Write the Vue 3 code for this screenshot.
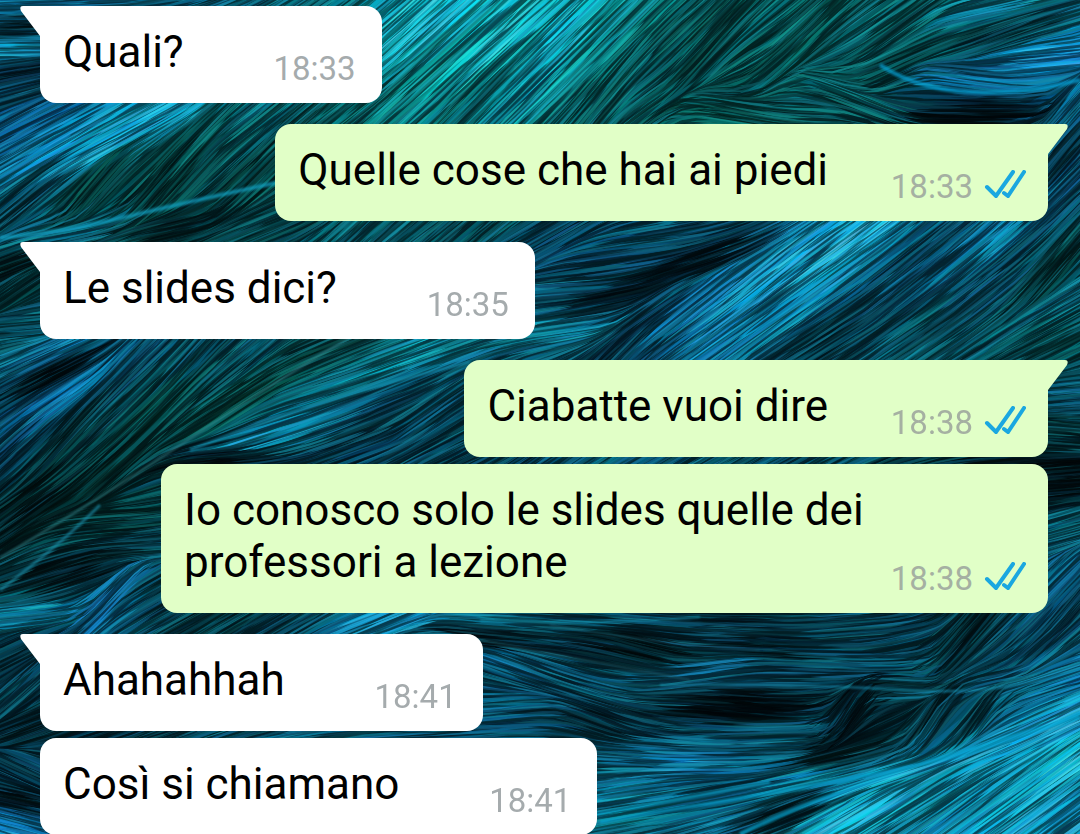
<script setup>
const messages = [
  { id: 1, text: 'Quali?', time: '18:33', sent: false, first: true },
  { id: 2, text: 'Quelle cose che hai ai piedi', time: '18:33', sent: true, first: true },
  { id: 3, text: 'Le slides dici?', time: '18:35', sent: false, first: true },
  { id: 4, text: 'Ciabatte vuoi dire', time: '18:38', sent: true, first: true },
  { id: 5, text: 'Io conosco solo le slides quelle dei professori a lezione', time: '18:38', sent: true, first: false },
  { id: 6, text: 'Ahahahhah', time: '18:41', sent: false, first: true },
  { id: 7, text: 'Così si chiamano', time: '18:41', sent: false, first: false }
]

// Plumage wallpaper: each knot is x, y, barb angle, brightness, hue.
const knots = [
  [10, 8, 2, 0.75, 200], [20, 25, 2, 0.15, 200], [15, 48, 0, 0.85, 193], [20, 72, 10, 0.2, 200], [20, 90, 15, 0.35, 200],
  [15, 122, 28, 0.6, 203], [40, 160, 30, 0.8, 199], [130, 125, 28, 0.95, 196], [95, 150, 28, 0.85, 196], [200, 160, 48, 0.35, 184],
  [20, 200, 40, 0.35, 195], [90, 190, 50, 0.2, 180], [160, 190, 50, 0.2, 180], [240, 130, 38, 0.5, 188], [350, 112, 38, 0.45, 184],
  [250, 180, 45, 0.25, 184], [420, 30, 42, 0.95, 188], [400, 90, 42, 0.6, 184], [500, 40, 42, 0.9, 186], [540, 60, 45, 0.85, 190],
  [470, 100, 45, 0.5, 184], [600, 40, 45, 0.6, 184], [600, 100, 50, 0.4, 184], [700, 60, 48, 0.35, 182], [800, 45, 44, 0.38, 182],
  [900, 25, 36, 0.4, 184], [900, 70, 25, 0.3, 184], [1000, 8, 12, 0.6, 192], [1000, 35, 20, 0.3, 192], [1050, 60, 5, 0.9, 202],
  [960, 78, -8, 0.6, 200], [980, 112, 0, 0.05, 200], [860, 100, -22, 0.38, 186], [740, 112, -10, 0.35, 182], [1065, 110, 50, 0.6, 199],
  [1065, 190, 45, 0.5, 201], [1060, 160, 50, 0.3, 201], [20, 265, 20, 0.12, 190], [10, 290, 35, 0.3, 188], [20, 325, 5, 0.4, 194],
  [60, 236, 10, 0.6, 194], [160, 230, 12, 0.2, 190], [250, 230, 22, 0.3, 188], [360, 230, 42, 0.45, 190], [470, 230, 40, 0.35, 190],
  [560, 238, 30, 0.42, 200], [650, 245, 8, 0.45, 198], [600, 262, 8, 0.38, 200], [690, 262, 18, 0.12, 200], [570, 290, 4, 0.45, 197],
  [600, 300, 12, 0.1, 200], [560, 325, 8, 0.65, 193], [640, 315, 35, 0.35, 200], [620, 350, 45, 0.3, 200], [700, 300, 38, 0.75, 200],
  [760, 280, 38, 0.9, 198], [850, 245, 36, 1, 194], [770, 320, 36, 0.7, 198], [900, 290, 38, 0.5, 200], [920, 245, 38, 0.45, 200],
  [1000, 240, 40, 0.75, 198], [980, 290, 38, 0.4, 198], [830, 340, 32, 0.3, 196], [920, 340, 34, 0.45, 192], [1050, 270, 50, 0.25, 186],
  [1050, 310, 30, 0.5, 192], [1050, 345, 26, 0.35, 186], [1065, 400, 5, 0.45, 197], [1065, 430, -5, 0.25, 190], [1065, 480, 5, 0.06, 196],
  [1065, 535, 15, 0.5, 194], [1060, 580, 45, 0.55, 200], [1065, 610, 50, 0.3, 200], [60, 346, 24, 0.8, 198], [55, 374, 27, 0.03, 200],
  [50, 402, 34, 0.8, 203], [115, 370, 46, 0.5, 200], [20, 440, 42, 0.35, 200], [60, 440, 48, 0.25, 190], [190, 360, 48, 0.38, 194],
  [160, 410, 45, 0.28, 180], [110, 470, 42, 0.2, 182], [250, 350, 40, 0.4, 194], [240, 400, 33, 0.25, 178], [330, 350, 22, 0.35, 184],
  [410, 355, 20, 0.7, 190], [320, 395, 18, 0.55, 192], [260, 440, 18, 0.8, 194], [230, 458, 4, 0.03, 200], [370, 405, 22, 0.45, 198],
  [420, 420, 35, 0.4, 196], [360, 450, 20, 0.35, 198], [20, 510, 35, 0.12, 190], [110, 520, 4, 0.25, 184], [140, 550, 3, 0.35, 194],
  [70, 575, 18, 0.1, 194], [20, 618, 5, 0.6, 192], [110, 600, 48, 0.75, 203], [150, 590, 30, 0.3, 196], [220, 622, 30, 0.3, 192],
  [390, 622, 22, 0.85, 198], [290, 622, 30, 0.35, 196], [10, 650, 25, 0.3, 198], [20, 690, 42, 0.35, 196], [15, 730, 20, 0.2, 196],
  [20, 770, -25, 0.35, 200], [15, 800, -12, 0.15, 200], [20, 825, -15, 0.8, 202], [510, 620, -3, 0.6, 194], [520, 665, -20, 0.6, 199],
  [500, 640, -5, 0.04, 200], [600, 625, -3, 0.4, 198], [640, 650, -14, 0.08, 194], [560, 685, -18, 0.4, 198], [520, 710, 5, 0.5, 198],
  [600, 720, -20, 0.2, 198], [700, 675, 8, 0.65, 196], [730, 705, -4, 0.01, 200], [780, 645, -3, 0.15, 198], [850, 630, 4, 0.4, 196],
  [860, 665, -3, 0.45, 196], [900, 685, -4, 0.4, 194], [850, 710, 58, 0.1, 198], [930, 720, 58, 0.2, 194], [960, 640, 50, 0.2, 194],
  [1040, 650, 40, 0.5, 198], [1000, 680, 10, 0.5, 198], [1065, 680, 18, 0.7, 200], [980, 715, 55, 0.3, 194], [1060, 720, 25, 0.95, 197],
  [980, 750, 22, 0.95, 196], [900, 770, 16, 0.9, 194], [800, 785, 12, 0.9, 196], [640, 750, -4, 0.45, 196], [690, 765, 0, 0.85, 200],
  [780, 740, 2, 0.45, 197], [830, 760, 12, 0.12, 190], [630, 790, 8, 0.6, 196], [640, 815, 10, 0.7, 192], [700, 800, 10, 0.35, 198],
  [780, 812, 22, 0.15, 194], [700, 830, 16, 0.6, 198], [840, 820, 30, 0.95, 192], [920, 800, 32, 0.75, 194], [960, 820, 36, 0.8, 196],
  [1020, 790, 36, 0.85, 192], [1060, 770, 36, 0.95, 188], [1060, 820, 36, 0.85, 196]
]

let seed = 7321
const random = () => {
  seed = (seed * 1664525 + 1013904223) % 4294967296
  return seed / 4294967296
}

function sample(x, y) {
  let total = 0
  let angle = 0
  let light = 0
  let hue = 0
  for (const [kx, ky, a, l, h] of knots) {
    const dx = x - kx
    const dy = y - ky
    const rad = (a * Math.PI) / 180
    const along = dx * Math.cos(rad) - dy * Math.sin(rad)
    const across = dx * Math.sin(rad) + dy * Math.cos(rad)
    const d = (along * along) / 5 + across * across * 1.6 + 60
    const w = 1 / (d * d)
    total += w
    angle += a * w
    light += l * w
    hue += h * w
  }
  return { angle: angle / total, light: light / total, hue: hue / total }
}

// A barb is a thin blade pointed at both ends, bent along the local direction.
function barb(x, y, length, width) {
  const middle = sample(x, y)
  const points = [[x, y]]
  for (const way of [1, -1]) {
    let px = x
    let py = y
    for (let i = 0; i < 3; i++) {
      const r = (sample(px, py).angle * Math.PI) / 180
      px += (Math.cos(r) * length * way) / 6
      py -= (Math.sin(r) * length * way) / 6
      if (way === 1) points.push([px, py])
      else points.unshift([px, py])
    }
  }
  const spread = [0, 0.7, 0.95, 1, 0.95, 0.7, 0]
  const r = (middle.angle * Math.PI) / 180
  const nx = (Math.sin(r) * width) / 2
  const ny = (Math.cos(r) * width) / 2
  const upper = points.map(([px, py], i) => `${(px - nx * spread[i]).toFixed(1)} ${(py - ny * spread[i]).toFixed(1)}`)
  const lower = points.map(([px, py], i) => `${(px + nx * spread[i]).toFixed(1)} ${(py + ny * spread[i]).toFixed(1)}`)
  return { d: `M${upper.join('L')}L${lower.reverse().join('L')}Z`, ...middle }
}

function layer(cell, length, width, opacity, contrast, darkShare) {
  const blades = []
  for (let y = -10; y < 850; y += cell) {
    for (let x = -50; x < 1120; x += cell * 2.4) {
      const b = barb(
        x + random() * cell * 2.4,
        y + random() * cell,
        length * (0.6 + random() * 0.8),
        width * (0.6 + random() * 0.8)
      )
      const dark = random() < darkShare
      const l = dark ? b.light * 20 : 4 + b.light * 50 + (random() - 0.5) * contrast
      const hue = b.hue - 2 + (random() - 0.5) * 14
      blades.push({
        d: b.d,
        fill: `hsl(${hue.toFixed(0)} ${dark ? 85 : 100 - contrast}% ${Math.max(2, l).toFixed(0)}%)`,
        opacity
      })
    }
  }
  return blades
}
const ground = layer(13, 90, 24, 0.85, 2, 0.1)
const strands = [
  ...layer(10, 120, 8, 0.6, 6, 0.38),
  ...layer(8, 100, 4, 0.65, 12, 0.4),
  ...layer(7, 80, 2, 0.75, 22, 0.4)
]

const quills = [
  { d: 'M0 238Q60 233 130 216T280 182', stroke: '#139fc0', width: 4 },
  { d: 'M0 558Q90 505 200 432T350 338', stroke: '#327f85', width: 2 },
  { d: 'M0 590Q60 545 100 505', stroke: '#1a86a0', width: 3 },
  { d: 'M470 362Q330 395 190 450', stroke: '#1589a8', width: 3 },
  { d: 'M880 65Q950 111 1080 80', stroke: '#079ed1', width: 4 },
  { d: 'M480 620Q600 625 700 617', stroke: '#1596b4', width: 2 },
  { d: 'M660 685Q800 683 900 690T1080 668', stroke: '#168eb0', width: 2 },
  { d: 'M600 822Q760 795 880 773T1080 712', stroke: '#079fcb', width: 4 },
  { d: 'M740 834Q850 780 1080 717', stroke: '#07a5d0', width: 4 },
  { d: 'M480 640Q560 655 690 680', stroke: '#317f91', width: 1 },
  { d: 'M550 625Q660 645 760 650', stroke: '#286e80', width: 1 },
  { d: 'M480 834Q590 817 770 782', stroke: '#08a3ca', width: 3 }
]
</script>

<template>
  <main class="chat">
    <svg class="wallpaper" viewBox="0 0 1080 834" preserveAspectRatio="xMidYMid slice" aria-hidden="true">
      <rect width="1080" height="834" fill="#02232f" />
      <g class="ground">
        <path v-for="(b, i) in ground" :key="i" :d="b.d" :fill="b.fill" :opacity="b.opacity" />
      </g>
      <g class="strands">
        <path v-for="(b, i) in strands" :key="i" :d="b.d" :fill="b.fill" :opacity="b.opacity" />
      </g>
      <g class="quills">
        <path v-for="q in quills" :key="q.d" :d="q.d" :stroke="q.stroke" :stroke-width="q.width" />
      </g>
    </svg>

    <ol class="messages">
      <li
        v-for="m in messages"
        :key="m.id"
        class="bubble"
        :class="{ sent: m.sent, first: m.first }"
      >
        <svg v-if="m.first" class="tail" viewBox="0 0 40 32" aria-hidden="true">
          <path d="M40 0H3Q-1 0 1 5L20 30V32H40Z" />
        </svg>
        <p class="text">{{ m.text }}<span class="spacer"></span></p>
        <div class="meta">
          <time>{{ m.time }}</time>
          <svg v-if="m.sent" class="ticks" viewBox="0 0 42 28" role="img" aria-label="Letto">
            <path d="M3 17L12 26L29 2M20 23L24 26L40 2" />
          </svg>
        </div>
      </li>
    </ol>
  </main>
</template>

<style>
body {
  margin: 0;
  background: #02232f;
}
</style>

<style scoped>
.chat {
  position: relative;
  height: 100vh;
  overflow: hidden;
  font-family: Roboto, "Liberation Sans", sans-serif;
}

.wallpaper {
  position: absolute;
  inset: 0;
  width: 100%;
  height: 100%;
}

.ground {
  filter: blur(3px);
}

.quills {
  fill: none;
  opacity: 0.75;
  filter: blur(1px);
}

.messages {
  position: relative;
  display: flex;
  flex-direction: column;
  align-items: flex-start;
  gap: 7px;
  margin: 0;
  padding: 6px 32px 0 40px;
  list-style: none;
}

.bubble {
  --fill: #ffffff;
  position: relative;
  box-sizing: border-box;
  max-width: 88%;
  padding: 20px 26px 25px 23px;
  border-radius: 16px;
  background: var(--fill);
}

.bubble.first {
  border-top-left-radius: 0;
}

.bubble.first:not(:first-child) {
  margin-top: 14px;
}

.bubble.sent {
  --fill: #e1ffc7;
  align-self: flex-end;
  padding-right: 23px;
}

.bubble.sent.first {
  border-top-left-radius: 16px;
  border-top-right-radius: 0;
}

.tail {
  position: absolute;
  top: 0;
  left: -20px;
  width: 40px;
  height: 32px;
  fill: var(--fill);
}

.sent .tail {
  left: auto;
  right: -20px;
  transform: scaleX(-1);
}

.text {
  margin: 0;
  color: #000000;
  font-size: 44px;
  line-height: 52px;
}

.spacer {
  display: inline-block;
  width: 172px;
}

.sent .spacer {
  width: 197px;
}

.meta {
  position: absolute;
  right: 26px;
  bottom: 14px;
  display: flex;
  align-items: center;
  gap: 11px;
  color: #a5abad;
  font-size: 33px;
  line-height: 40px;
}

.sent .meta {
  right: 22px;
  color: #a5b0a2;
}

.ticks {
  width: 42px;
  height: 28px;
  margin-bottom: 6px;
  fill: none;
  stroke: #1aa7e0;
  stroke-width: 4;
  stroke-linecap: round;
}
</style>
